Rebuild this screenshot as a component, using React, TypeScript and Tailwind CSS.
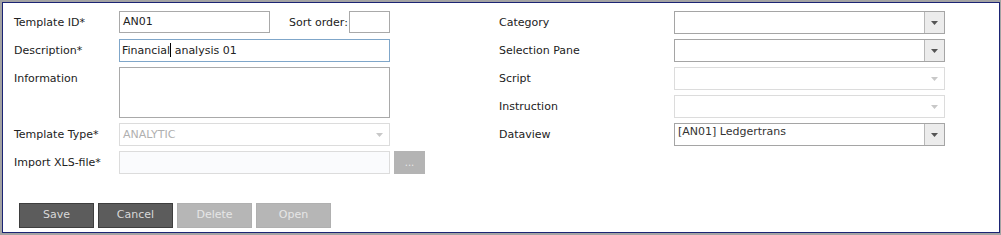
import React from "react";

const font = { fontFamily: '"DejaVu Sans", Verdana, sans-serif' };

function Arrow({ disabled }: { disabled?: boolean }) {
  return (
    <div
      className={
        "flex w-[20px] items-center justify-center self-stretch border-l " +
        (disabled ? "border-transparent bg-transparent" : "border-[#b8b8b8] bg-[#ececec]")
      }
    >
      <svg width="7" height="4" viewBox="0 0 7 4">
        <path d="M0 0 H7 L3.5 4 Z" fill={disabled ? "#c8c8c8" : "#555"} />
      </svg>
    </div>
  );
}

function Select({ value, disabled, top }: { value?: string; disabled?: boolean; top?: boolean }) {
  return (
    <div
      className={
        "flex h-[23px] w-[271px] border " +
        (disabled ? "border-[#dcdcdc] bg-white" : "border-[#a5a5a5] bg-white")
      }
    >
      <div
        className={
          "flex-1 px-[3px] text-[11px] leading-[14px] " +
          (top ? "pt-[1px] text-[#333]" : "pt-[4px]") +
          (disabled ? " text-[#b0b0b0]" : "")
        }
      >
        {value}
      </div>
      <Arrow disabled={disabled} />
    </div>
  );
}

function Btn({ label, active }: { label: string; active?: boolean }) {
  return (
    <div
      className={
        "flex h-[25px] w-[75px] items-center justify-center text-[11px] " +
        (active
          ? "border border-[#3e3e3e] bg-[#5c5c5c] text-[#d8d8d8]"
          : "border border-[#b0b0b0] bg-[#b6b6b6] text-[#e6e6e6]")
      }
    >
      {label}
    </div>
  );
}

export default function App() {
  return (
    <div style={font} className="h-[235px] w-[1001px] bg-white text-[11px] text-[#222]">
      <div className="h-full w-full border-t-2 border-l-2 border-r-[1px] border-b-[2px] border-[#a3a3a3]">
        <div className="h-full w-full border border-[#1b2474] bg-white">
          <div className="flex pt-[8px] pl-[11px]">
            {/* left column */}
            <div className="flex w-[485px] flex-col">
              <div className="flex h-[28px] items-start">
                <div className="w-[105px] pt-[4px] whitespace-nowrap">Template ID*</div>
                <div className="h-[22px] w-[151px] border border-[#a9a9a9] px-[3px] pt-[3px] leading-[14px]">AN01</div>
                <div className="w-[79px] pl-[19px] pt-[4px] whitespace-nowrap">Sort order:</div>
                <div className="h-[22px] w-[41px] border border-[#a9a9a9]" />
              </div>
              <div className="flex h-[28px] items-start">
                <div className="w-[105px] pt-[4px]">Description*</div>
                <div className="h-[23px] w-[271px] border border-[#7fa6c9] px-[2px] pt-[3px] leading-[14px] whitespace-nowrap">
                  Financial<span className="inline-block h-[14px] w-[1px] bg-black align-[-3px]" /> analysis 01
                </div>
              </div>
              <div className="flex h-[56px] items-start">
                <div className="w-[105px] pt-[4px]">Information</div>
                <div className="h-[51px] w-[271px] border border-[#a9a9a9]" />
              </div>
              <div className="flex h-[28px] items-start">
                <div className="w-[105px] pt-[4px] whitespace-nowrap">Template Type*</div>
                <Select value="ANALYTIC" disabled />
              </div>
              <div className="flex h-[28px] items-start">
                <div className="w-[105px] pt-[4px] whitespace-nowrap">Import XLS-file*</div>
                <div className="h-[23px] w-[271px] border border-[#dcdcdc] bg-[#fafbfd]" />
                <div className="ml-[4px] flex h-[23px] w-[31px] items-center justify-center bg-[#b4b4b4] text-[#e8e8e8]">
                  <span className="text-[10px] leading-none">...</span>
                </div>
              </div>
            </div>
            {/* right column */}
            <div className="flex flex-col">
              {[
                { l: "Category" },
                { l: "Selection Pane" },
                { l: "Script", d: true },
                { l: "Instruction", d: true },
                { l: "Dataview", v: "[AN01] Ledgertrans" },
              ].map((r) => (
                <div key={r.l} className="flex h-[28px] items-start">
                  <div className="w-[175px] pt-[4px]">{r.l}</div>
                  <Select value={r.v} disabled={r.d} top={!!r.v} />
                </div>
              ))}
            </div>
          </div>
          <div className="mt-[24px] flex gap-[4px] pl-[16px]">
            <Btn label="Save" active />
            <Btn label="Cancel" active />
            <Btn label="Delete" />
            <Btn label="Open" />
          </div>
        </div>
      </div>
    </div>
  );
}
